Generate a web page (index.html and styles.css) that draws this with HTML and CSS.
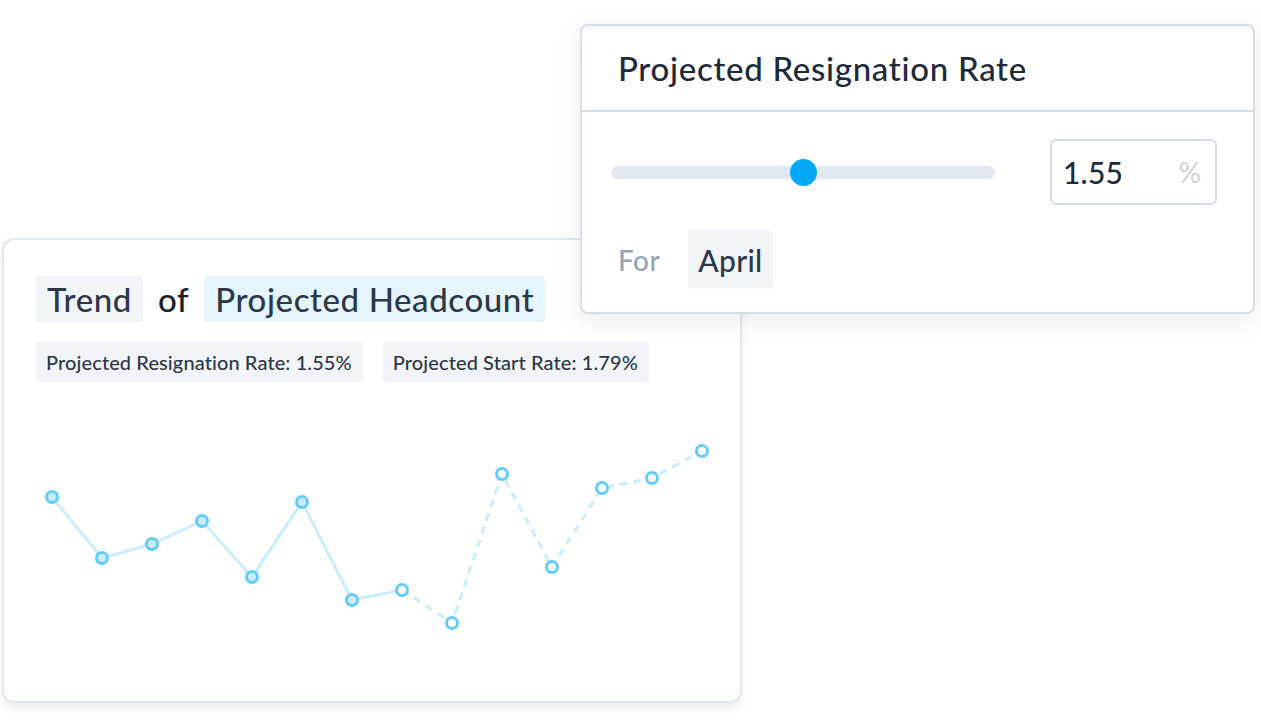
FILE: index.html
```html
<!DOCTYPE html>
<html lang="en">
<head>
    <meta charset="UTF-8">
    <meta name="viewport" content="width=device-width, initial-scale=1.0">
    <title>Projected Headcount</title>
    <link rel="stylesheet" href="styles.css">
</head>
<body>
    <div class="stage">
        <div class="trend-card">
            <div class="trend-title">
                <span class="chip">Trend</span>
                <span class="plain">of</span>
                <span class="chip chip-blue">Projected Headcount</span>
            </div>
            <div class="tags">
                <span class="tag">Projected Resignation Rate: 1.55%</span>
                <span class="tag">Projected Start Rate: 1.79%</span>
            </div>
            <svg class="chart" width="680" height="260" viewBox="0 0 680 260">
                <!-- actuals -->
                <polyline class="line" points="16,85 66,146 116,132 166,109 216,165 266,90 316,188 366,178"/>
                <!-- projection -->
                <polyline class="line dashed" points="366,178 416,211 466,62 516,155 566,76 616,66 666,39"/>
                <g class="dot past">
                    <circle cx="16" cy="85" r="5.5"/>
                    <circle cx="66" cy="146" r="5.5"/>
                    <circle cx="116" cy="132" r="5.5"/>
                    <circle cx="166" cy="109" r="5.5"/>
                    <circle cx="216" cy="165" r="5.5"/>
                    <circle cx="266" cy="90" r="5.5"/>
                    <circle cx="316" cy="188" r="5.5"/>
                </g>
                <g class="dot future">
                    <circle cx="366" cy="178" r="5.5"/>
                    <circle cx="416" cy="211" r="5.5"/>
                    <circle cx="466" cy="62" r="5.5"/>
                    <circle cx="516" cy="155" r="5.5"/>
                    <circle cx="566" cy="76" r="5.5"/>
                    <circle cx="616" cy="66" r="5.5"/>
                    <circle cx="666" cy="39" r="5.5"/>
                </g>
            </svg>
        </div>

        <div class="rate-card">
            <div class="rate-header">Projected Resignation Rate</div>
            <div class="rate-body">
                <div class="slider-row">
                    <div class="slider">
                        <div class="thumb"></div>
                    </div>
                    <div class="rate-input">
                        <span class="value">1.55</span>
                        <span class="unit">%</span>
                    </div>
                </div>
                <div class="period">
                    <span class="for">For</span>
                    <span class="month">April</span>
                </div>
            </div>
        </div>
    </div>
</body>
</html>
```

FILE: styles.css
```css
body {
    margin: 0;
    background: #fff;
    font-family: Lato, 'Noto Sans', sans-serif;
    font-weight: 500;
    color: #1e293b;
}
.stage {
    position: relative;
    width: 1261px;
    height: 728px;
    overflow: hidden;
}

/* trend card */
.trend-card {
    position: absolute;
    left: 2px;
    top: 238px;
    width: 740px;
    height: 465px;
    box-sizing: border-box;
    padding: 36px 32px 0;
    border: 2px solid #e2e8f0;
    border-radius: 12px;
    background: #fff;
    box-shadow: 0 5px 8px rgba(148, 163, 184, 0.2);
}
.trend-title {
    display: flex;
    align-items: center;
    gap: 15px;
    height: 46px;
}
.chip {
    display: flex;
    align-items: center;
    height: 46px;
    padding: 0 11px;
    border-radius: 4px;
    background: #f1f5f9;
    font-size: 33px;
    letter-spacing: 0.6px;
    color: #2d3748;
}
.chip-blue {
    background: #e5f5fd;
}
.plain {
    font-size: 33px;
    letter-spacing: 0.6px;
    color: #1a202c;
}
.tags {
    display: flex;
    gap: 20px;
    margin-top: 20px;
}
.tag {
    display: flex;
    align-items: center;
    height: 40px;
    padding: 0 11px 0 10px;
    border-radius: 4px;
    background: #f1f5f9;
    font-size: 20px;
    letter-spacing: 0.1px;
    color: #2d3748;
}
.chart {
    display: block;
    margin-top: 30px;
}
.line {
    fill: none;
    stroke: #caedfd;
    stroke-width: 3;
}
.dashed {
    stroke-dasharray: 8 6;
}
.dot circle {
    stroke: #66cbfb;
    stroke-width: 3;
}
.past circle {
    fill: #cbecfb;
}
.future circle {
    fill: #fff;
}

/* rate card */
.rate-card {
    position: absolute;
    left: 580px;
    top: 24px;
    width: 675px;
    height: 290px;
    box-sizing: border-box;
    border: 2px solid #d5dde8;
    border-radius: 8px;
    background: #fff;
    box-shadow: 0 6px 24px rgba(100, 116, 139, 0.14);
}
.rate-header {
    height: 86px;
    box-sizing: border-box;
    padding: 22px 36px 0;
    border-bottom: 2px solid #d5dde8;
    font-size: 33px;
    letter-spacing: 0.7px;
    color: #1e293b;
}
.rate-body {
    padding: 27px 36px 0 29px;
}
.slider-row {
    display: flex;
    align-items: center;
    justify-content: space-between;
}
.slider {
    position: relative;
    width: 384px;
    height: 13px;
    border-radius: 7px;
    background: #e2e8f0;
}
.thumb {
    position: absolute;
    left: 179px;
    top: -7px;
    width: 27px;
    height: 27px;
    border-radius: 50%;
    background: #04a8f4;
}
.rate-input {
    display: flex;
    align-items: center;
    justify-content: space-between;
    width: 167px;
    height: 66px;
    box-sizing: border-box;
    padding: 0 14px 0 11px;
    border: 2px solid #d5dde8;
    border-radius: 6px;
}
.value {
    font-size: 30px;
    letter-spacing: 0.2px;
    color: #1e293b;
}
.unit {
    font-size: 28px;
    color: #cbd5e1;
}
.period {
    display: flex;
    align-items: center;
    gap: 28px;
    margin-top: 25px;
}
.for {
    padding-left: 7px;
    font-size: 28px;
    letter-spacing: 0.5px;
    color: #94a3b8;
}
.month {
    display: flex;
    align-items: center;
    height: 59px;
    padding: 0 10px;
    border-radius: 4px;
    background: #f1f5f9;
    font-size: 30px;
    letter-spacing: 0.3px;
    color: #2d3748;
}
```
